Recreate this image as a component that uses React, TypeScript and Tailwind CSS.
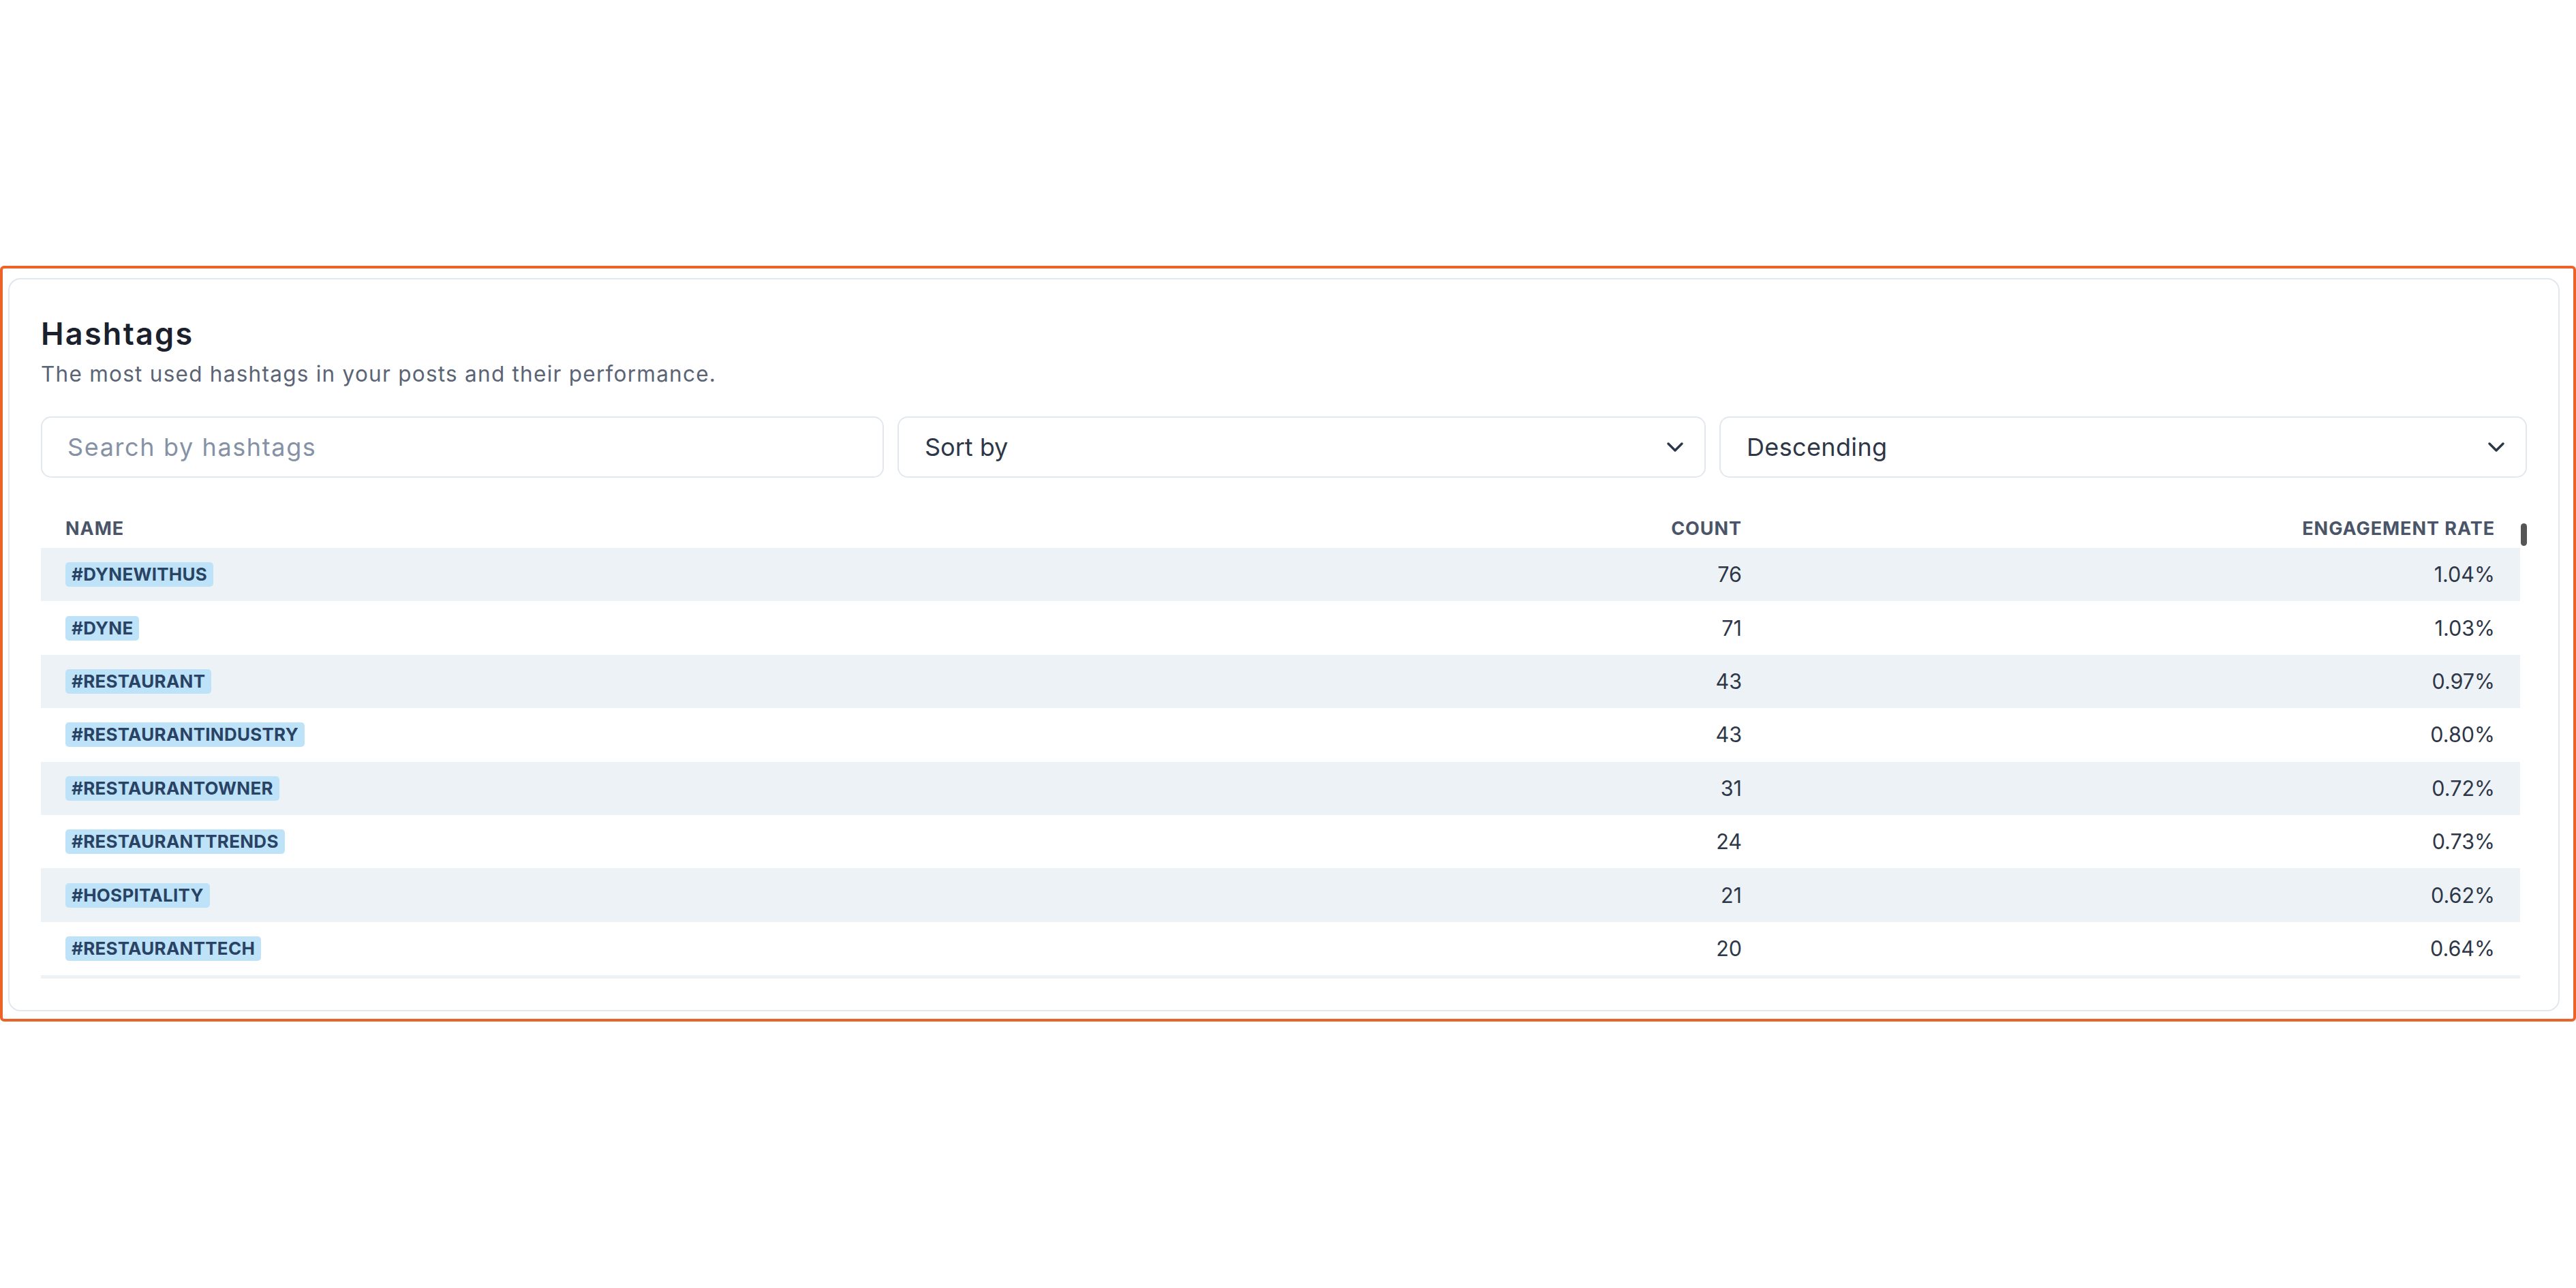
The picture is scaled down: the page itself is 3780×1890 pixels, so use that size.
import React from "react";
import { ChevronDown } from "lucide-react";

const rows = [
  { tag: "#DYNEWITHUS", count: 76, rate: "1.04%" },
  { tag: "#DYNE", count: 71, rate: "1.03%" },
  { tag: "#RESTAURANT", count: 43, rate: "0.97%" },
  { tag: "#RESTAURANTINDUSTRY", count: 43, rate: "0.80%" },
  { tag: "#RESTAURANTOWNER", count: 31, rate: "0.72%" },
  { tag: "#RESTAURANTTRENDS", count: 24, rate: "0.73%" },
  { tag: "#HOSPITALITY", count: 21, rate: "0.62%" },
  { tag: "#RESTAURANTTECH", count: 20, rate: "0.64%" },
];

export default function App() {
  return (
    <div
      className="w-[3780px] h-[1890px] bg-white pt-[390px]"
      style={{ fontFamily: "Inter, 'Noto Sans', sans-serif" }}
    >
      <div className="h-[1109px] border-4 border-[#ec6327] rounded-[6px] pl-[8px] pr-[20px] pt-[14px] pb-[11px]">
        <div className="h-[1076px] border-2 border-[#e2e8f0] rounded-[18px] bg-white px-[46px] pt-[53px] flex flex-col">
          <h2 className="text-[45px] leading-[54px] font-semibold text-[#1a202c] tracking-[0.05em]">
            Hashtags
          </h2>
          <p className="mt-[9px] text-[31.5px] leading-[45px] text-[#5a6475] tracking-[0.04em]">
            The most used hashtags in your posts and their performance.
          </p>

          <div className="mt-[40px] flex gap-[20px] h-[90px]">
            <div className="w-[1237px] h-full border-2 border-[#e2e8f0] rounded-[15px] flex items-center px-[37px]">
              <input
                className="w-full bg-transparent outline-none text-[36px] tracking-[0.045em] text-[#2d3748] placeholder:text-[#8592a6]"
                placeholder="Search by hashtags"
              />
            </div>
            <div className="w-[1186px] h-full border-2 border-[#e2e8f0] rounded-[15px] flex items-center justify-between pl-[38px] pr-[23px]">
              <span className="text-[36px] text-[#2d3748]">Sort by</span>
              <ChevronDown size={40} strokeWidth={2.1} className="text-[#2d3748]" />
            </div>
            <div className="flex-1 h-full border-2 border-[#e2e8f0] rounded-[15px] flex items-center justify-between pl-[38px] pr-[23px]">
              <span className="text-[36px] text-[#2d3748] tracking-[0.01em]">Descending</span>
              <ChevronDown size={40} strokeWidth={2.1} className="text-[#2d3748]" />
            </div>
          </div>

          <div className="mt-[57px] h-[678px] flex overflow-hidden">
            <div className="flex-1 flex flex-col">
              <div className="grid grid-cols-[1fr_560px_1105px] h-[46px] shrink-0 text-[27px] leading-[36px] font-bold tracking-[0.035em] text-[#4a5568]">
                <div className="pl-[36px]">NAME</div>
                <div className="pr-[37px] text-right">COUNT</div>
                <div className="pr-[37px] text-right">ENGAGEMENT RATE</div>
              </div>
              {rows.map((r, i) => (
                <div
                  key={r.tag}
                  className={
                    "grid grid-cols-[1fr_560px_1105px] h-[78.4px] shrink-0 items-center " +
                    (i % 2 === 0 ? "bg-[#edf2f7]" : "bg-white")
                  }
                >
                  <div className="pl-[36px] flex">
                    <span className="bg-[#bee3f8] text-[#2a4365] text-[26px] leading-[36px] font-bold tracking-[0.01em] px-[9px] rounded-[5px]">
                      {r.tag}
                    </span>
                  </div>
                  <div className="pr-[37px] text-right text-[30.5px] text-[#2d3748]">
                    {r.count}
                  </div>
                  <div className="pr-[37px] text-right text-[30.5px] text-[#2d3748]">
                    {r.rate}
                  </div>
                </div>
              ))}
              <div className="h-[6px] shrink-0 bg-[#edf2f7]" />
            </div>
            <div className="w-[10px] shrink-0 flex justify-end">
              <div className="mt-[10px] w-[9px] h-[33px] rounded-full bg-[#555555]" />
            </div>
          </div>
        </div>
      </div>
    </div>
  );
}
